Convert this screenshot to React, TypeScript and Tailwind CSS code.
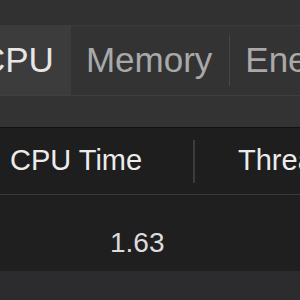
export default function App() {
  return (
    <div
      className="w-[300px] h-[300px] overflow-hidden bg-[#2c2c2e] flex flex-col"
      style={{ fontFamily: '"Liberation Sans", Arial, sans-serif' }}
    >
      {/* Toolbar strip */}
      <div className="h-[26px] shrink-0 bg-[#313131] border-b border-[#3b3b3b]" />

      {/* Tabs */}
      <div className="h-[70px] shrink-0 flex items-stretch bg-[#333333] border-b border-[#3f3f3f] ml-[-38px] whitespace-nowrap text-[35px]">
        <div className="flex items-center pl-[18px] pr-[17px] bg-[#3c3c3c] text-[#e6e6e6]">CPU</div>
        <div className="flex items-center pl-[15px] pr-[17px] text-[#a9a9a9]">Memory</div>
        <div className="w-px self-center h-[51px] shrink-0 bg-[#474747]" />
        <div className="flex items-center pl-[15px] text-[#a9a9a9]">Energy</div>
      </div>

      {/* Gap area */}
      <div className="h-[32px] shrink-0 bg-[#333333] border-b border-[#111111]" />

      {/* Column header */}
      <div className="h-[67px] shrink-0 flex items-center bg-[#1e1e1e] border-b border-[#3a3a3a] text-[29px] text-[#ececec] whitespace-nowrap">
        <div className="w-[193px] shrink-0 pl-[10px]">CPU Time</div>
        <div className="w-[2px] h-[43px] shrink-0 bg-[#3c3c3c]" />
        <div className="pl-[43px]">Threads</div>
      </div>

      {/* Data row */}
      <div className="h-[76px] shrink-0 flex items-center pt-[20px] bg-[#1f1f20] text-[28px] text-[#dcdcdc]">
        <div className="pl-[110px]">1.63</div>
      </div>

      <div className="flex-1 bg-[#2c2c2e]" />
    </div>
  )
}
